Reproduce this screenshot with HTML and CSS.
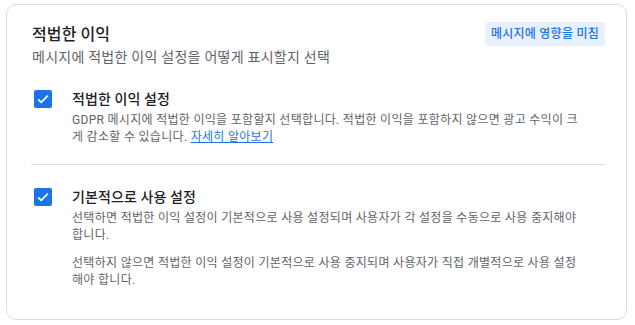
FILE: index.html
```html
<!DOCTYPE html>
<html lang="ko">
<head>
    <meta charset="UTF-8">
    <meta name="viewport" content="width=device-width, initial-scale=1.0">
    <title>적법한 이익</title>
    <link rel="stylesheet" href="styles.css">
</head>
<body>
    <div class="card">
        <div class="card-header">
            <div class="card-title">
                <h2>적법한 이익</h2>
                <p>메시지에 적법한 이익 설정을 어떻게 표시할지 선택</p>
            </div>
            <span class="badge">메시지에 영향을 미침</span>
        </div>

        <div class="option">
            <span class="checkbox">
                <svg viewBox="0 0 18 18" width="18" height="18"><path d="M4.2 9.3l3 3L13.8 5.7" fill="none" stroke="#fff" stroke-width="1.8"/></svg>
            </span>
            <div class="option-body">
                <div class="option-label">적법한 이익 설정</div>
                <p class="option-desc">GDPR 메시지에 적법한 이익을 포함할지 선택합니다. 적법한 이익을 포함하지 않으면 광고 수익이 크게 감소할 수 있습니다. <a href="#">자세히 알아보기</a></p>
            </div>
        </div>

        <div class="divider"></div>

        <div class="option">
            <span class="checkbox">
                <svg viewBox="0 0 18 18" width="18" height="18"><path d="M4.2 9.3l3 3L13.8 5.7" fill="none" stroke="#fff" stroke-width="1.8"/></svg>
            </span>
            <div class="option-body">
                <div class="option-label">기본적으로 사용 설정</div>
                <p class="option-desc">선택하면 적법한 이익 설정이 기본적으로 사용 설정되며 사용자가 각 설정을 수동으로 사용 중지해야 합니다.</p>
                <p class="option-desc">선택하지 않으면 적법한 이익 설정이 기본적으로 사용 중지되며 사용자가 직접 개별적으로 사용 설정해야 합니다.</p>
            </div>
        </div>
    </div>
</body>
</html>
```

FILE: styles.css
```css
body, html {
    margin: 0;
    font-family: Roboto, "Noto Sans CJK KR", sans-serif;
    background-color: #fff;
}
body {
    padding: 4px 8px 0 6px;
}
.card {
    box-sizing: border-box;
    width: 621px;
    height: 316px;
    border: 1px solid #dadce0;
    border-radius: 10px;
    padding: 16px 21px 0 25px;
}
.card-header {
    display: flex;
    justify-content: space-between;
    align-items: flex-start;
}
.card-title h2 {
    margin: 3px 0 0;
    font-size: 16px;
    font-weight: 500;
    color: #202124;
    line-height: 22px;
    letter-spacing: 0.1px;
}
.card-title p {
    margin: 1px 0 0;
    font-size: 14px;
    color: #5f6368;
    line-height: 20px;
    letter-spacing: 0.25px;
}
.badge {
    background-color: #e8f0fe;
    color: #1a73e8;
    font-size: 12px;
    font-weight: 500;
    line-height: 24px;
    padding: 0 6px;
    border-radius: 4px;
    letter-spacing: 0.25px;
    margin-top: 1px;
}
.option {
    display: flex;
    align-items: flex-start;
    gap: 20px;
    margin-top: 22px;
    padding-left: 2px;
}
.checkbox {
    flex: none;
    width: 18px;
    height: 18px;
    margin-top: 1px;
    border-radius: 2px;
    background-color: #1a73e8;
    display: flex;
}
.option-body {
    width: 510px;
}
.option-label {
    font-size: 14px;
    font-weight: 500;
    color: #202124;
    line-height: 20px;
    letter-spacing: 0.1px;
}
.option-desc {
    margin: 3px 0 0;
    font-size: 12px;
    color: #5f6368;
    line-height: 17px;
    letter-spacing: 0.3px;
}
.option-desc + .option-desc {
    margin-top: 11px;
}
.option-desc a {
    color: #1a73e8;
}
.divider {
    height: 1px;
    background-color: #dadce0;
    margin: 18px 0 0 -1px;
}
```
